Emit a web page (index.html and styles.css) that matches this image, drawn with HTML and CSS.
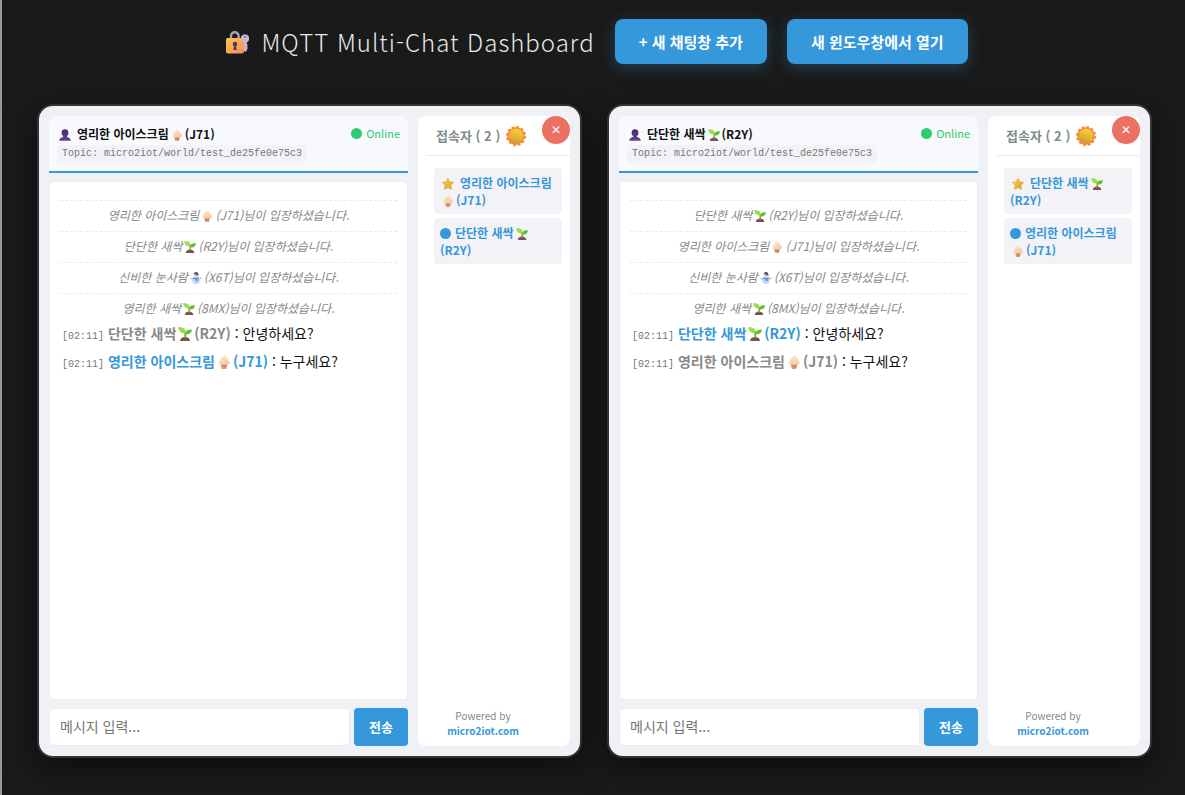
FILE: index.html
```
<!DOCTYPE html>
<html lang="ko">

<head>
    <meta charset="UTF-8">
    <meta name="viewport" content="width=device-width, initial-scale=1.0">
    <title>MQTT Multi-Chat Dashboard</title>
    <link rel="stylesheet" href="styles.css">
</head>

<body>
    <!-- 아이콘 모음 -->
    <svg class="sprite" aria-hidden="true">
        <defs>
            <linearGradient id="gLock" x1="0" y1="0" x2="1" y2="1">
                <stop offset="0" stop-color="#ffc94a" />
                <stop offset="1" stop-color="#f8875a" />
            </linearGradient>
            <linearGradient id="gUser" x1="0" y1="0" x2="0" y2="1">
                <stop offset="0" stop-color="#432a63" />
                <stop offset="1" stop-color="#66409b" />
            </linearGradient>
            <linearGradient id="gSun" x1="0.6" y1="0" x2="0.3" y2="1">
                <stop offset="0" stop-color="#ffd23c" />
                <stop offset="1" stop-color="#cf982e" />
            </linearGradient>
            <linearGradient id="gCream" x1="0" y1="0" x2="1" y2="1">
                <stop offset="0" stop-color="#fff0d0" />
                <stop offset="1" stop-color="#f3c7a0" />
            </linearGradient>
            <linearGradient id="gStar" x1="0" y1="0" x2="1" y2="1">
                <stop offset="0" stop-color="#ffd84a" />
                <stop offset="1" stop-color="#d49a28" />
            </linearGradient>
        </defs>
        <symbol id="lock" viewBox="0 0 24 24">
            <path d="M6 10V6a3.800 3.800 0 0 1 7.600 0v4" fill="none" stroke="#aaa2b4" stroke-width="2.4" />
            <rect x="1" y="8" width="18" height="15.500" rx="1.800" fill="url(#gLock)" />
            <circle cx="10" cy="14" r="2.300" fill="#53365f" />
            <path d="M9 15h2l.7 5H8.300z" fill="#53365f" />
            <path d="M18.200 4.500h3.600L24 6.800v3.400l-2 2.200v2l.9 1-.9 1.300.9 1.300-.9 1.300v1L20.500 22 18.800 20.500v-8L16 10.200V6.800z" fill="#c3b8d4" />
            <circle cx="20" cy="7" r="1" fill="#6e6580" />
        </symbol>
        <symbol id="user" viewBox="0 0 12 12">
            <path d="M6 .3c2.300 0 3.400 1.500 3.400 3.400 0 1.500-.5 2.600-1.500 3.300v.9c2.400.5 3.700 1.300 3.900 3.800H.2c.2-2.500 1.500-3.300 3.900-3.800V7C3.100 6.300 2.600 5.200 2.600 3.700 2.600 1.800 3.700.3 6 .3z" fill="url(#gUser)" />
        </symbol>
        <symbol id="cone" viewBox="0 0 12 12">
            <path d="M2.600 6.800h6.800L7.900 12H4.300z" fill="#dd9b75" />
            <path d="M4 8.500l3.800 2M8.200 8.500l-3.800 2" stroke="#b9705a" stroke-width=".4" />
            <path d="M6.400 0C5.600.7 3.700 1.600 3.400 3.200 2.400 3.600 2 4.300 2 5.100c-.5.300-.7.800-.7 1.400 0 1.100.8 1.700 1.900 1.700h5.800c1.100 0 1.900-.6 1.900-1.700 0-.6-.3-1.100-.8-1.400 0-.9-.5-1.600-1.300-1.900C8.500 1.600 7.300.9 6.400 0z" fill="url(#gCream)" />
            <path d="M3.500 4.200c1.600.6 3.200.4 4.600-.3M2.600 6.200c2.200.6 4.600.4 6.600-.3" fill="none" stroke="#f0cda6" stroke-width=".5" />
        </symbol>
        <symbol id="sprout" viewBox="0 0 12 12">
            <path d="M1.800 12c.1-2.200 1.700-3.500 4.200-3.500s4.200 1.300 4.300 3.500z" fill="#835050" />
            <path d="M6.200 9.500V4.500" stroke="#5fae32" stroke-width="1.400" />
            <path d="M6.600 5.300C3.500 6 .8 4.300 0 .2 4.200-.2 7 1.300 6.600 5.300z" fill="#9ade40" />
            <path d="M6.200 6.200c-.2-2.900 2-4.300 5.800-3.800-.2 2.800-2.800 4.600-5.800 3.800z" fill="#66bd38" />
        </symbol>
        <symbol id="snowman" viewBox="0 0 12 12">
            <circle cx="6" cy="8.200" r="3.800" fill="#cdd3ea" />
            <circle cx="6.200" cy="3.800" r="2.600" fill="#e3e8f6" />
            <path d="M4.700 0l3.200.6-.2 1.500 1.100.5-.2.700-5.200-1.200.2-.6 1 .1z" fill="#41405e" />
            <path d="M3.200 5.200c1.800.8 3.900.8 5.700 0l.3 1.300-1.800.5.300 2.200H5.800L5.600 7.300 3 6.700z" fill="#4a89e6" />
            <path d="M2.600 7.500L.6 6.200M9.400 7.500l2.200-2" stroke="#8a7084" stroke-width=".7" />
            <path d="M6.200 3.900h1.600L6.200 4.700z" fill="#f08040" />
            <circle cx="5.300" cy="3.400" r=".4" fill="#333" />
            <circle cx="7.300" cy="3.600" r=".4" fill="#333" />
        </symbol>
        <symbol id="star" viewBox="0 0 12 12">
            <path d="M6 .5l1.700 3.400 3.800.5-2.700 2.900.8 4L6 9.500 2.400 11.300l.8-4L.5 4.400l3.800-.5z" fill="url(#gStar)" stroke="#e3b02e" stroke-width=".9" stroke-linejoin="round" />
        </symbol>
        <symbol id="sun" viewBox="0 0 20 20">
            <circle cx="10" cy="10" r="8.700" fill="#f58b36" />
            <circle cx="10" cy="10" r="9" fill="none" stroke="#f58b36" stroke-width="2" stroke-dasharray="2.800 1.912" />
            <circle cx="10" cy="10" r="7.300" fill="url(#gSun)" />
        </symbol>
    </svg>

    <header class="header">
        <h1><svg class="lock"><use href="#lock" /></svg>MQTT Multi-Chat Dashboard</h1>
        <button type="button" class="btn">+ 새 채팅창 추가</button>
        <button type="button" class="btn">새 윈도우창에서 열기</button>
    </header>

    <main class="dashboard">
        <section class="window">
            <div class="chat">
                <div class="chat-header">
                    <div class="chat-title">
                        <h2><svg class="emoji user"><use href="#user" /></svg>영리한 아이스크림<svg class="emoji"><use href="#cone" /></svg>(J71)</h2>
                        <span class="status"><i class="dot"></i>Online</span>
                    </div>
                    <span class="topic">Topic: micro2iot/world/test_de25fe0e75c3</span>
                </div>
                <div class="messages">
                    <p class="system">영리한 아이스크림<svg class="emoji"><use href="#cone" /></svg>(J71)님이 입장하셨습니다.</p>
                    <p class="system">단단한 새싹<svg class="emoji"><use href="#sprout" /></svg>(R2Y)님이 입장하셨습니다.</p>
                    <p class="system">신비한 눈사람<svg class="emoji"><use href="#snowman" /></svg>(X6T)님이 입장하셨습니다.</p>
                    <p class="system">영리한 새싹<svg class="emoji"><use href="#sprout" /></svg>(8MX)님이 입장하셨습니다.</p>
                    <p class="message"><span class="time">[02:11]</span> <b class="name">단단한 새싹<svg class="emoji"><use href="#sprout" /></svg>(R2Y)</b> : 안녕하세요?</p>
                    <p class="message"><span class="time">[02:11]</span> <b class="name me">영리한 아이스크림<svg class="emoji"><use href="#cone" /></svg>(J71)</b> : 누구세요?</p>
                </div>
                <form class="input-area">
                    <input type="text" placeholder="메시지 입력..." aria-label="메시지 입력">
                    <button type="button">전송</button>
                </form>
            </div>
            <aside class="sidebar">
                <h3>접속자 ( 2 )<svg class="sun"><use href="#sun" /></svg></h3>
                <ul class="users">
                    <li><svg class="emoji star"><use href="#star" /></svg>영리한 아이스크림<svg class="emoji"><use href="#cone" /></svg>(J71)</li>
                    <li><i class="dot"></i>단단한 새싹<svg class="emoji"><use href="#sprout" /></svg>(R2Y)</li>
                </ul>
                <p class="powered">Powered by<a href="#">micro2iot.com</a></p>
            </aside>
            <button type="button" class="close" aria-label="닫기">✕</button>
        </section>

        <section class="window">
            <div class="chat">
                <div class="chat-header">
                    <div class="chat-title">
                        <h2><svg class="emoji user"><use href="#user" /></svg>단단한 새싹<svg class="emoji"><use href="#sprout" /></svg>(R2Y)</h2>
                        <span class="status"><i class="dot"></i>Online</span>
                    </div>
                    <span class="topic">Topic: micro2iot/world/test_de25fe0e75c3</span>
                </div>
                <div class="messages">
                    <p class="system">단단한 새싹<svg class="emoji"><use href="#sprout" /></svg>(R2Y)님이 입장하셨습니다.</p>
                    <p class="system">영리한 아이스크림<svg class="emoji"><use href="#cone" /></svg>(J71)님이 입장하셨습니다.</p>
                    <p class="system">신비한 눈사람<svg class="emoji"><use href="#snowman" /></svg>(X6T)님이 입장하셨습니다.</p>
                    <p class="system">영리한 새싹<svg class="emoji"><use href="#sprout" /></svg>(8MX)님이 입장하셨습니다.</p>
                    <p class="message"><span class="time">[02:11]</span> <b class="name me">단단한 새싹<svg class="emoji"><use href="#sprout" /></svg>(R2Y)</b> : 안녕하세요?</p>
                    <p class="message"><span class="time">[02:11]</span> <b class="name">영리한 아이스크림<svg class="emoji"><use href="#cone" /></svg>(J71)</b> : 누구세요?</p>
                </div>
                <form class="input-area">
                    <input type="text" placeholder="메시지 입력..." aria-label="메시지 입력">
                    <button type="button">전송</button>
                </form>
            </div>
            <aside class="sidebar">
                <h3>접속자 ( 2 )<svg class="sun"><use href="#sun" /></svg></h3>
                <ul class="users">
                    <li><svg class="emoji star"><use href="#star" /></svg>단단한 새싹<svg class="emoji"><use href="#sprout" /></svg>(R2Y)</li>
                    <li><i class="dot"></i>영리한 아이스크림<svg class="emoji"><use href="#cone" /></svg>(J71)</li>
                </ul>
                <p class="powered">Powered by<a href="#">micro2iot.com</a></p>
            </aside>
            <button type="button" class="close" aria-label="닫기">✕</button>
        </section>
    </main>
</body>

</html>
```
FILE: styles.css
```
* {
    margin: 0;
    padding: 0;
    box-sizing: border-box;
}

body {
    min-height: 100vh;
    background: #1a1a1a;
    border-left: 2px solid #999;
    font-family: "Noto Sans CJK KR", sans-serif;
    font-size: 14px;
    color: #111;
}

ul {
    list-style: none;
}

button,
input {
    font-family: inherit;
    border: none;
}

button {
    cursor: pointer;
}

.sprite {
    position: absolute;
    width: 0;
    height: 0;
}

.header {
    display: flex;
    justify-content: center;
    align-items: center;
    gap: 20px;
    padding: 19px 0 40px 6px;
}

.header h1 {
    display: flex;
    align-items: center;
    gap: 12px;
    font-size: 24px;
    font-weight: 300;
    line-height: 38px;
    letter-spacing: 1px;
    color: #e8e8e8;
}

.lock {
    width: 24px;
    height: 24px;
}

.btn {
    height: 45px;
    padding: 0 24px;
    border-radius: 8px;
    background: #3498db;
    box-shadow: 0 4px 15px rgba(52, 152, 219, 0.3);
    color: #fff;
    font-size: 15px;
    font-weight: bold;
}

.dashboard {
    display: grid;
    grid-template-columns: repeat(2, 1fr);
    gap: 25px;
    padding: 0 33px 37px 35px;
}

.window {
    position: relative;
    display: grid;
    grid-template-columns: 1fr 152px;
    gap: 10px;
    min-height: 654px;
    padding: 10px;
    border: 2px solid #333;
    border-radius: 16px;
    background: #f0f1f6;
    box-shadow: 0 10px 30px rgba(0, 0, 0, 0.5);
}

.chat {
    display: flex;
    flex-direction: column;
    min-width: 0;
}

.chat-header {
    height: 57px;
    padding: 8px;
    border-bottom: 2px solid #3498db;
    border-radius: 8px 8px 0 0;
    background: #f8f9fc;
}

.chat-title {
    display: flex;
    justify-content: space-between;
    align-items: center;
    height: 18px;
}

.chat-title h2 {
    font-size: 12px;
    font-weight: bold;
}

.emoji {
    width: 12px;
    height: 12px;
    margin: 0 2px;
    vertical-align: -2px;
}

.user,
.star {
    margin-right: 6px;
}

.status {
    color: #2ecc71;
    font-size: 11px;
}

.dot {
    display: inline-block;
    width: 11px;
    height: 11px;
    margin-right: 4px;
    border-radius: 50%;
    background: currentColor;
    vertical-align: -1px;
}

.topic {
    display: block;
    width: fit-content;
    margin-top: 3px;
    padding: 0 5px;
    border-radius: 4px;
    background: #f3f2f6;
    color: #777;
    font: 10px/18px "Liberation Mono", monospace;
}

.messages {
    flex: 1;
    margin: 8px 0;
    padding: 18px 10px;
    border: 1px solid #ebecf0;
    border-radius: 4px;
    background: #fff;
}

.system {
    height: 31px;
    padding-top: 5px;
    border-top: 1px dashed #eaeaea;
    color: #888;
    font-size: 12px;
    font-style: italic;
    line-height: 18px;
    text-align: center;
}

.message {
    height: 28px;
    padding-left: 2px;
    line-height: 18px;
}

.message .emoji {
    width: 14px;
    height: 14px;
}

.time {
    color: #777;
    font: 10px "Liberation Mono", monospace;
}

.name {
    color: #888;
}

.name.me {
    color: #3498db;
}

.input-area {
    display: flex;
    gap: 4px;
}

.input-area input {
    flex: 1;
    min-width: 0;
    height: 38px;
    padding: 0 10px 2px;
    border: 1px solid #ebecf0;
    border-radius: 4px;
    background: #fff;
    font-size: 14px;
}

.input-area button {
    width: 54px;
    padding-bottom: 2px;
    border-radius: 4px;
    background: #3498db;
    color: #fff;
    font-size: 13px;
    font-weight: bold;
}

.sidebar {
    display: flex;
    flex-direction: column;
    padding: 0 0 8px 8px;
    border-radius: 8px;
    background: #fff;
}

.sidebar h3 {
    display: flex;
    align-items: center;
    gap: 6px;
    height: 40px;
    padding-left: 10px;
    border-bottom: 1px solid #ebebee;
    color: #7f8c8d;
    font-size: 13px;
}

.sun {
    width: 20px;
    height: 20px;
}

.users {
    flex: 1;
    padding: 12px 8px;
}

.users li {
    height: 46px;
    margin-bottom: 4px;
    padding: 6px;
    border-radius: 4px;
    background: #f3f2f7;
    color: #3498db;
    font-size: 12px;
    font-weight: bold;
    line-height: 17px;
}

.powered {
    padding-right: 30px;
    color: #888;
    font-size: 10px;
    line-height: 15px;
    text-align: center;
}

.powered a {
    display: block;
    color: #3498db;
    font-weight: bold;
    text-decoration: none;
}

.close {
    position: absolute;
    top: 10px;
    right: 10px;
    width: 28px;
    height: 28px;
    padding-bottom: 4px;
    border-radius: 50%;
    background: #ed7065;
    color: #fff;
    font-size: 12px;
}
```
